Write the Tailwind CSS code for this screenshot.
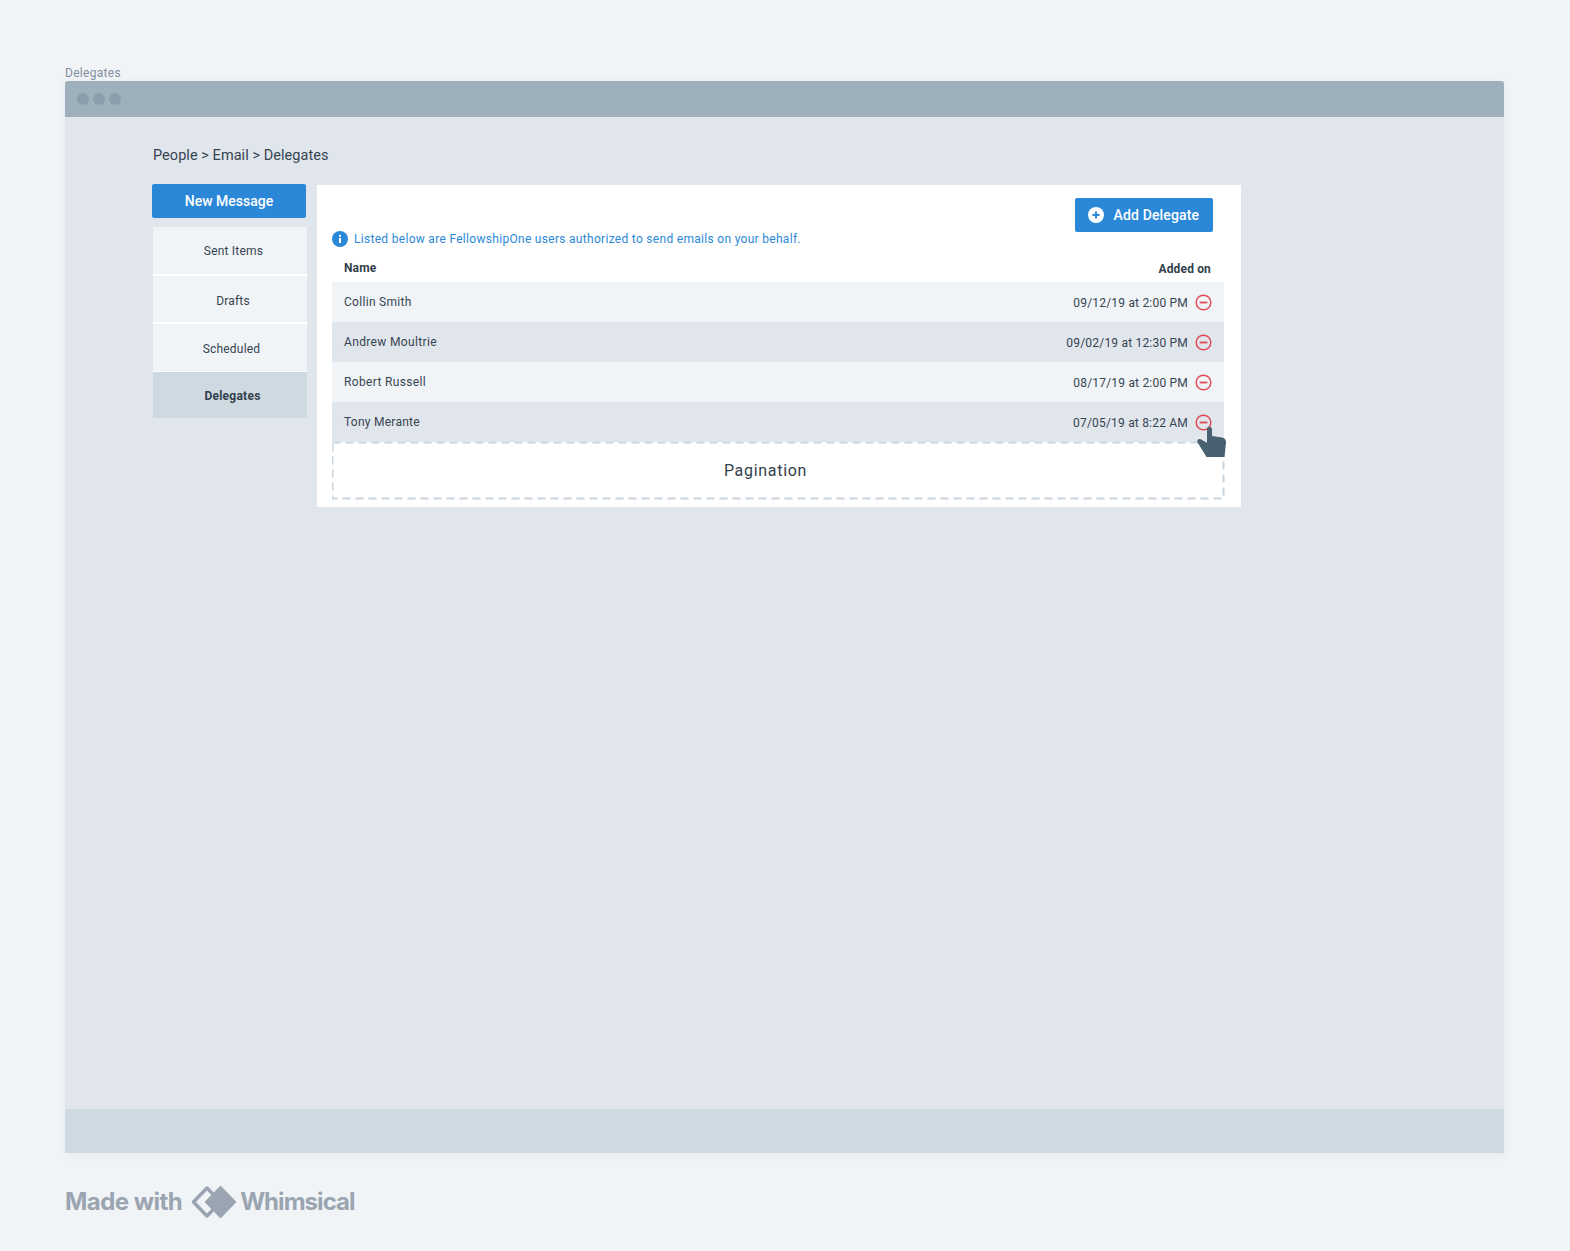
<!DOCTYPE html>
<html>
<head>
<meta charset="utf-8">
<script src="https://cdn.jsdelivr.net/npm/@tailwindcss/browser@4"></script>
</head>
<body class="bg-[#f0f4f7] font-['Roboto',sans-serif] text-[#243b53]">
<div class="w-[1570px] h-[1251px] pl-[65px] pt-[66px] flex flex-col overflow-hidden">
  <div class="h-[15px] leading-[15px] text-[12px] text-[#7f8f9e] tracking-[0.3px]">Delegates</div>
  <div class="w-[1439px] h-[1072px] flex flex-col bg-[#e0e6ec] shadow-[0_2px_10px_rgba(16,42,67,0.05)]">
    <div class="h-[36px] shrink-0 bg-[#9fb0bd] rounded-t-[3px] flex items-center gap-[4px] pl-[12px]">
      <span class="w-[12px] h-[12px] rounded-full bg-[#8b9eab]"></span>
      <span class="w-[12px] h-[12px] rounded-full bg-[#8b9eab]"></span>
      <span class="w-[12px] h-[12px] rounded-full bg-[#8b9eab]"></span>
    </div>
    <div class="flex-1 pl-[87px] pt-[29px]">
      <div class="h-[20px] leading-[20px] pl-[1px] text-[14.5px] text-[#364452] tracking-[0.05px]">People &gt; Email &gt; Delegates</div>
      <div class="flex items-start gap-[10px] mt-[18px]">
        <div class="w-[155px] flex flex-col">
          <div class="w-[154px] h-[34px] bg-[#2b88d8] rounded-[2px] flex items-center justify-center text-white text-[14px] font-medium">New Message</div>
          <div class="mt-[9px] ml-[1px] flex flex-col">
            <div class="h-[49px] bg-[#f0f4f7] border-b-2 border-white flex items-center justify-center pl-[7px] text-[12px] text-[#364452] tracking-[0.2px]">Sent Items</div>
            <div class="h-[48px] bg-[#f0f4f7] border-b-2 border-white flex items-center justify-center pl-[6px] pt-[3px] text-[12px] text-[#364452] tracking-[0.2px]">Drafts</div>
            <div class="h-[48px] bg-[#f0f4f7] border-b border-white flex items-center justify-center pl-[3px] pt-[2px] text-[12px] text-[#364452] tracking-[0.2px]">Scheduled</div>
            <div class="h-[46px] bg-[#ced9e1] flex items-center justify-center pl-[5px] pt-[2px] text-[12px] font-bold text-[#323f4b] tracking-[0.25px]">Delegates</div>
          </div>
        </div>
        <div class="w-[924px] h-[322px] mt-[1px] bg-white pl-[15px] pr-[17px] pt-[13px] relative">
          <div class="flex justify-end pr-[11px]">
            <div class="w-[138px] h-[34px] bg-[#2b88d8] rounded-[2px] flex items-center pl-[13px] gap-[9.5px] text-white text-[14px] font-medium tracking-[0.15px]">
              <svg width="16" height="16" viewBox="0 0 16 16"><circle cx="8" cy="8" r="8" fill="#fff"/><path d="M8 4.400v7.200M4.400 8h7.200" stroke="#2b88d8" stroke-width="2"/></svg>
              <span>Add Delegate</span>
            </div>
          </div>
          <div class="flex items-center h-[16px] mt-[-1px] gap-[6px] text-[12px] text-[#2b88d8] tracking-[0.3px]">
            <svg width="16" height="16" viewBox="0 0 16 16"><circle cx="8" cy="8" r="8" fill="#2b88d8"/><rect x="7" y="7" width="2" height="5" fill="#fff"/><rect x="7" y="3.800" width="2" height="2" fill="#fff"/></svg>
            <span>Listed below are FellowshipOne users authorized to send emails on your behalf.</span>
          </div>
          <div class="flex justify-between items-center h-[20px] mt-[11px] mb-[4px] pl-[12px] pr-[13px] text-[12px] font-bold text-[#323f4b] tracking-[0.15px]">
            <span>Name</span><span class="relative top-[1px]">Added on</span>
          </div>
          <div class="h-[40px] bg-[#f0f4f7] flex items-center justify-between pl-[12px] pr-[12px] text-[12px] text-[#364452] tracking-[0.3px]">
            <span>Collin Smith</span>
            <span class="flex items-center gap-[7px]"><span class="relative top-[1px] tracking-[0.2px]">09/12/19 at 2:00 PM</span>
              <svg width="17" height="17" viewBox="0 0 17 17"><circle cx="8.500" cy="8.500" r="7.300" fill="none" stroke="#e12d39" stroke-width="1.500" opacity=".85"/><path d="M4.600 8.500h7.800" stroke="#e12d39" stroke-width="1.800" opacity=".85"/></svg></span>
          </div>
          <div class="h-[40px] bg-[#e0e6ec] flex items-center justify-between pl-[12px] pr-[12px] text-[12px] text-[#364452] tracking-[0.35px]">
            <span>Andrew Moultrie</span>
            <span class="flex items-center gap-[7px]"><span class="relative top-[1px] tracking-[0.2px]">09/02/19 at 12:30 PM</span>
              <svg width="17" height="17" viewBox="0 0 17 17"><circle cx="8.500" cy="8.500" r="7.300" fill="none" stroke="#e12d39" stroke-width="1.500" opacity=".85"/><path d="M4.600 8.500h7.800" stroke="#e12d39" stroke-width="1.800" opacity=".85"/></svg></span>
          </div>
          <div class="h-[40px] bg-[#f0f4f7] flex items-center justify-between pl-[12px] pr-[12px] text-[12px] text-[#364452] tracking-[0.35px]">
            <span>Robert Russell</span>
            <span class="flex items-center gap-[7px]"><span class="relative top-[1px] tracking-[0.2px]">08/17/19 at 2:00 PM</span>
              <svg width="17" height="17" viewBox="0 0 17 17"><circle cx="8.500" cy="8.500" r="7.300" fill="none" stroke="#e12d39" stroke-width="1.500" opacity=".85"/><path d="M4.600 8.500h7.800" stroke="#e12d39" stroke-width="1.800" opacity=".85"/></svg></span>
          </div>
          <div class="h-[40px] bg-[#e0e6ec] flex items-center justify-between pl-[12px] pr-[12px] text-[12px] text-[#364452] tracking-[0.25px]">
            <span>Tony Merante</span>
            <span class="flex items-center gap-[7px]"><span class="relative top-[1px] tracking-[0.2px]">07/05/19 at 8:22 AM</span>
              <svg width="17" height="17" viewBox="0 0 17 17"><circle cx="8.500" cy="8.500" r="7.300" fill="none" stroke="#e12d39" stroke-width="1.500" opacity=".85"/><path d="M4.600 8.500h7.800" stroke="#e12d39" stroke-width="1.800" opacity=".85"/></svg></span>
          </div>
          <div class="h-[57px] relative flex items-center justify-center pr-[25px] text-[16px] text-[#323f4b] tracking-[0.7px]">Pagination
            <svg class="absolute left-0 top-0" width="893" height="58" viewBox="0 0 893 58" fill="none"><rect x="0.500" y="0.500" width="891" height="56" stroke="#c8d4de" stroke-width="2" stroke-dasharray="8 5"/></svg>
          </div>
          <svg class="absolute left-[880px] top-[242px]" width="30" height="31" viewBox="0 0 30 31"><path d="M10 2c0-2.600 5-2.600 5 0v7l10 1.500c2.600.4 4.200 2.400 4 5L27.500 30H9.500L.6 15.500c-1.200-2.400 1.200-4.200 3.200-3.200L10 16z" fill="#486070"/></svg>
        </div>
      </div>
    </div>
    <div class="h-[44px] shrink-0 bg-[#ced9e1]"></div>
  </div>
  <div class="flex items-center h-[32px] mt-[33px] text-[24px] font-bold text-[#9aa5b1] tracking-[-0.55px] font-['Inter',sans-serif]">
    <span>Made with</span>
    <svg class="ml-[9px] mr-[3px]" width="46" height="34" viewBox="0 0 46 34"><path d="M16 3 2.500 17 16 31 29.500 17z" fill="none" stroke="#9aa5b1" stroke-width="3.500" stroke-linejoin="round"/><path d="M29.500 1 45 17 29.500 33 14 17z" fill="#9aa5b1" stroke="#9aa5b1" stroke-width="1" stroke-linejoin="round"/></svg>
    <span class="tracking-[-0.95px]">Whimsical</span>
  </div>
</div>
</body>
</html>
